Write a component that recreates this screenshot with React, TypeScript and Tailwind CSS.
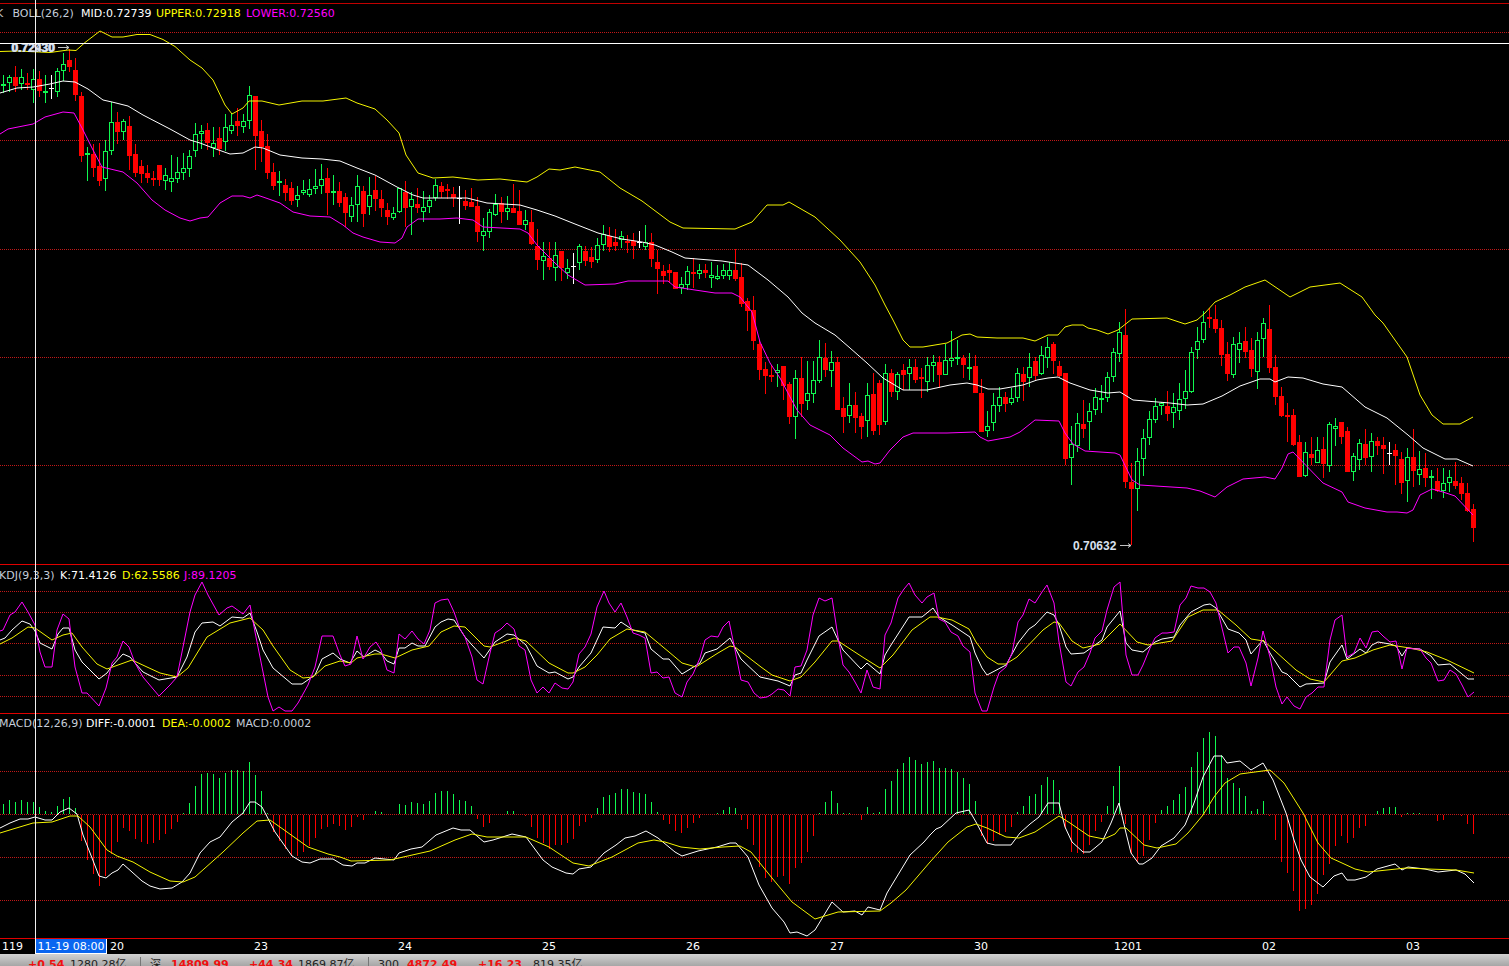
// FX chart terminal: candles with BOLL, KDJ and MACD panes
type Candle = [number, number, number, number, number];

// [type, high, bodyTop, bodyBottom, low] in page pixels. type: 0 red, 1 green, 2 white cross
const CANDLES: Candle[] = [
  [1,75,84,85,93],[1,75,77,83,92],[0,66,77,86,92],[1,69,77,84,90],[0,73,83,85,90],[1,69,79,90,103],[0,71,79,91,97],[1,75,91,93,103],[2,75,88,88,99],[1,68,71,92,97],
  [1,53,64,71,81],[0,49,60,67,72],[0,58,70,95,101],[0,92,96,156,162],[1,147,153,155,181],[0,144,154,168,177],[0,143,166,181,186],[1,140,151,179,191],[1,102,122,151,155],[0,112,122,132,144],
  [1,119,121,132,140],[0,116,126,156,170],[0,144,154,173,177],[0,160,166,174,183],[0,165,173,178,183],[0,171,178,180,186],[0,165,165,180,186],[1,168,175,181,190],[1,155,178,182,192],[1,157,172,179,183],
  [1,153,168,173,180],[1,150,156,169,177],[1,123,134,151,157],[1,125,131,134,149],[0,123,130,143,150],[1,127,143,148,157],[0,127,138,149,155],[1,114,127,142,151],[1,113,125,131,134],[0,108,121,126,136],
  [1,114,121,127,133],[1,86,95,121,129],[0,96,96,136,170],[0,120,131,147,162],[0,134,146,173,179],[0,163,172,186,190],[1,171,181,183,196],[0,179,185,193,201],[0,182,188,201,205],[1,186,195,200,207],
  [1,180,190,193,195],[1,179,189,195,197],[1,169,186,189,194],[1,164,179,186,194],[0,168,178,193,215],[1,175,191,193,205],[0,182,191,203,207],[0,193,197,213,227],[1,197,205,217,222],[1,175,186,205,222],
  [0,186,191,214,227],[1,177,195,207,215],[0,176,190,199,211],[0,190,199,208,217],[0,203,210,217,225],[1,207,213,218,220],[1,188,188,212,213],[0,181,192,208,227],[1,192,199,207,235],[0,188,204,208,213],
  [1,191,207,212,222],[1,195,200,207,213],[1,179,185,198,201],[0,182,186,192,198],[0,184,189,191,199],[0,187,194,198,207],[2,186,198,198,224],[0,190,201,206,210],[0,188,202,207,207],[0,197,206,232,242],
  [1,218,231,236,251],[1,209,212,232,238],[1,194,204,215,216],[0,197,203,212,223],[1,196,208,212,220],[0,184,208,213,213],[0,190,211,225,225],[1,210,220,225,230],[0,210,222,244,245],[0,229,246,260,270],
  [1,242,256,261,280],[0,242,258,267,270],[1,242,255,268,281],[0,251,251,268,281],[1,259,268,273,279],[2,253,266,266,284],[1,244,246,263,270],[0,246,251,261,266],[0,247,257,262,268],[1,238,245,260,263],
  [1,225,234,245,251],[0,227,236,247,252],[0,229,242,246,251],[1,231,236,240,248],[0,235,241,243,253],[0,233,241,246,259],[2,231,242,242,248],[1,225,242,247,250],[0,233,242,259,267],[0,250,262,269,294],
  [0,265,271,276,284],[0,264,270,273,283],[0,272,272,289,289],[1,277,284,288,294],[1,266,271,285,290],[0,258,272,274,288],[1,264,270,274,279],[0,264,270,273,278],[1,262,275,278,288],[1,265,276,279,280],
  [1,264,270,276,279],[1,262,270,276,280],[0,249,270,279,281],[0,263,277,304,307],[0,298,301,311,331],[0,296,310,341,350],[0,340,344,370,380],[0,362,369,376,394],[0,365,375,376,382],[1,364,370,373,387],
  [0,366,366,386,400],[0,382,384,417,424],[1,370,378,417,439],[0,357,378,404,417],[1,361,393,401,410],[1,361,380,394,403],[1,340,357,381,383],[0,343,358,370,377],[1,351,362,371,387],[0,357,362,410,410],
  [0,397,408,417,433],[1,383,405,416,423],[0,392,405,418,433],[0,413,416,427,439],[1,383,395,421,437],[0,373,394,431,435],[0,380,383,425,435],[1,364,373,422,425],[0,369,373,392,397],[1,372,374,392,400],
  [0,364,370,375,390],[1,359,367,374,390],[0,359,367,380,383],[0,368,377,379,398],[1,357,365,382,392],[1,355,362,366,382],[0,356,362,375,388],[1,344,360,375,375],[1,331,358,361,367],[1,340,357,359,365],
  [0,355,358,365,378],[1,353,367,369,380],[0,355,366,393,393],[0,379,393,432,432],[1,411,426,431,437],[1,393,405,423,431],[1,387,397,406,412],[0,392,397,404,412],[1,388,398,403,405],[1,368,373,398,402],
  [0,367,374,382,401],[1,353,367,378,387],[0,357,361,376,380],[1,346,355,374,375],[1,337,347,358,368],[0,342,344,361,374],[0,361,366,376,377],[0,373,373,459,465],[1,426,444,458,485],[1,413,423,446,452],
  [0,400,424,429,438],[1,403,411,422,450],[1,388,397,410,415],[1,385,398,400,413],[1,372,377,398,402],[1,348,352,377,382],[1,322,332,354,362],[0,309,335,482,488],[0,463,482,489,545],[1,448,461,489,511],
  [1,429,438,459,476],[1,411,419,438,445],[1,398,406,420,423],[1,402,403,406,415],[0,391,406,414,421],[1,393,407,413,428],[1,383,399,411,420],[1,370,391,399,409],[1,347,352,392,393],[1,327,341,350,359],
  [1,311,322,340,343],[0,308,317,319,328],[0,305,319,329,333],[0,320,328,355,366],[0,342,354,374,381],[1,337,344,375,378],[1,332,343,350,363],[0,327,341,352,358],[0,338,350,369,377],[1,332,340,372,389],
  [1,318,323,339,357],[0,305,329,368,373],[0,355,367,397,405],[0,387,396,416,417],[0,403,415,417,442],[0,409,415,445,446],[0,435,442,477,477],[1,442,452,476,477],[0,437,454,458,465],[1,437,450,463,463],
  [0,437,449,464,478],[1,422,424,466,472],[1,418,426,429,446],[0,422,422,437,444],[0,427,431,472,472],[1,453,456,472,481],[1,439,443,460,470],[0,429,444,458,465],[1,433,441,457,472],[0,437,441,446,455],
  [0,437,445,449,474],[2,442,453,453,465],[0,444,450,456,485],[0,452,459,483,494],[1,448,457,481,502],[0,429,457,471,487],[1,451,469,475,485],[0,453,468,478,487],[1,470,476,478,499],[0,468,481,491,492],
  [1,468,483,491,498],[1,470,477,483,492],[0,462,481,486,489],[0,477,483,494,500],[0,483,493,511,512],[0,504,509,528,542],
];

const UPPER = "0,51.5 17,51 50,52.5 68,50 76,50.5 85,42.5 100,31 112,37 123,37 137,34.5 150,34.5 163,39.5 175,46.5 190,60 202,68 213,80 225,105 232,114 243,108 249,101 262,101 279,105 302,101 323,101 346,98 357,103 375,109 387,120 399,133 406,155 418,173 433,178 453,177 478,180 500,179 527,182 537,177 549,169 560,170 575,167 600,172 620,188 642,201 670,222 683,228 735,229 752,222 767,205 783,205 789,202 815,217 840,240 860,262 875,285 885,305 893,320 903,340 910,347 923,347 947,343 962,335 970,334 977,337 997,338 1023,338 1035,341 1048,335 1058,335 1065,327 1072,325 1083,325 1088,328 1097,330 1108,334 1118,330 1132,319 1167,318 1185,324 1197,320 1205,313 1215,302 1230,295 1245,287 1265,280 1290,297 1310,287 1340,283 1362,297 1375,315 1383,323 1407,357 1420,395 1432,415 1443,424 1460,424 1473,417";
const MID = "0,93 17,88 33,87 50,84 63,81 75,82 88,89 103,100 112,102 128,106 143,115 170,129 190,140 200,143 213,148 230,154 243,153 255,147 263,148 280,155 302,158 322,159 340,161 357,168 375,175 397,187 413,195 423,198 467,198 487,203 520,205 537,210 555,216 575,224 598,233 622,239 642,242 655,245 672,252 685,258 722,261 748,265 768,280 788,297 802,313 815,323 835,335 850,348 867,363 883,378 903,390 927,390 950,385 967,383 977,385 988,389 1000,389 1023,385 1037,380 1048,378 1058,377 1070,383 1090,390 1108,393 1120,392 1133,400 1170,403 1187,405 1203,404 1222,396 1240,386 1260,379 1270,379 1275,382 1288,377 1303,378 1323,384 1342,387 1365,407 1387,418 1408,435 1423,448 1445,459 1457,459 1473,466";
const LOWER = "0,134 8,129 33,124 45,117 63,112 74,113 82,128 93,150 102,167 123,172 137,183 152,200 165,210 180,218 190,221 200,218 208,217 220,203 232,196 243,196 250,198 257,195 263,197 280,203 293,212 310,216 330,217 343,225 353,233 363,237 380,242 395,243 402,238 407,227 418,219 440,219 457,218 473,220 483,227 520,229 528,233 537,245 555,263 568,275 585,285 615,284 628,281 668,281 675,287 715,293 732,293 740,297 752,312 760,342 770,363 780,378 797,410 810,425 830,435 843,448 862,462 868,461 875,464 880,463 890,450 903,437 913,433 947,433 975,432 980,437 988,441 1010,437 1020,432 1035,420 1059,421 1065,433 1073,444 1085,451 1115,453 1120,455 1132,480 1140,485 1187,488 1200,491 1215,497 1227,487 1243,479 1265,477 1275,479 1282,468 1288,454 1293,452 1323,483 1342,492 1348,502 1365,508 1387,512 1397,512 1407,513 1413,510 1420,495 1432,489 1443,492 1455,496 1473,515";

const K_LINE = "0,640 5,638 12,630 22,621 30,624 35,631 40,643 52,649 58,634 63,628 69,628 75,650 82,662 99,679 107,673 112,666 123,654 130,657 135,663 143,672 159,680 177,677 187,657 195,632 202,623 213,622 220,626 232,617 243,618 250,613 257,632 263,650 273,668 292,684 302,684 315,675 322,659 333,653 340,659 350,663 357,651 364,657 375,650 381,653 387,661 394,664 399,648 405,648 412,643 418,646 425,646 435,627 441,622 448,619 454,620 465,637 472,645 484,658 495,642 507,634 514,635 526,645 537,666 549,673 555,672 568,679 573,677 579,667 591,653 603,627 615,628 621,622 633,630 645,633 651,649 663,659 669,659 682,674 700,663 705,653 717,649 730,638 741,659 760,677 778,681 790,686 795,675 801,673 807,660 819,636 832,627 838,640 843,650 861,669 867,663 880,674 885,655 891,645 909,617 922,617 933,608 939,617 952,625 970,637 975,653 982,668 987,675 1006,665 1018,643 1029,629 1035,625 1047,612 1054,615 1059,625 1066,647 1071,654 1084,653 1102,640 1107,627 1120,611 1126,643 1132,650 1143,652 1155,642 1162,639 1174,637 1180,625 1191,612 1204,605 1210,604 1216,608 1228,629 1239,633 1246,640 1251,654 1263,640 1270,653 1282,672 1287,674 1300,687 1306,684 1324,683 1330,662 1342,645 1347,659 1360,649 1366,653 1372,645 1378,642 1390,644 1396,646 1402,656 1407,648 1420,649 1431,656 1438,665 1450,664 1468,679 1474,679";
const D_LINE = "0,644 12,638 28,627 35,628 52,640 63,635 72,633 82,647 97,664 107,669 132,660 147,667 160,673 177,677 188,668 207,637 230,623 250,618 263,630 273,646 290,670 303,678 313,677 325,666 340,661 351,663 357,658 375,654 381,654 395,658 412,650 429,646 441,632 454,626 465,627 484,646 490,647 514,638 526,641 549,663 568,673 573,673 585,667 597,655 610,639 627,629 645,632 669,652 682,663 696,667 718,653 730,646 735,647 761,667 772,675 790,681 801,677 815,662 832,641 838,641 864,658 880,668 893,655 912,630 930,617 937,617 952,620 969,629 976,642 987,657 998,664 1006,664 1017,657 1043,630 1054,622 1059,623 1072,641 1083,648 1100,644 1120,624 1137,642 1148,645 1172,641 1188,617 1203,610 1218,610 1236,625 1251,639 1264,641 1296,670 1310,679 1324,682 1342,661 1355,658 1373,650 1390,645 1410,648 1427,652 1447,660 1474,673";
const J_LINE = "0,631 3,630 10,615 15,612 22,602 28,612 35,625 40,652 45,667 52,667 57,630 63,614 69,619 75,667 82,693 87,693 99,706 106,688 112,663 117,657 123,641 129,647 135,663 143,677 159,696 170,685 177,677 183,647 190,612 195,595 202,582 208,595 219,615 227,608 232,606 243,614 250,605 255,632 262,667 268,697 273,711 279,707 285,711 292,711 298,703 308,685 315,667 322,636 333,636 340,655 345,666 351,664 357,636 363,659 370,647 376,642 381,650 387,670 394,673 399,634 405,639 412,631 418,639 424,644 430,630 435,603 441,600 448,599 454,612 460,629 465,637 472,657 477,680 483,684 490,653 495,633 501,629 507,623 514,629 519,646 525,650 531,680 537,693 543,687 549,693 555,683 562,688 568,689 573,682 579,654 585,647 591,634 597,607 604,591 609,603 615,612 621,603 627,617 633,633 639,635 645,638 651,673 657,672 663,678 669,677 675,693 682,697 687,682 693,674 700,658 705,640 711,636 718,637 723,627 729,621 735,650 741,680 748,682 754,693 760,698 767,697 772,694 778,689 784,690 790,696 795,667 801,666 807,650 813,615 819,598 825,601 832,598 838,637 843,665 849,672 855,682 861,693 867,670 873,687 880,689 885,635 891,623 898,598 904,589 909,583 915,595 922,603 927,597 934,593 939,619 945,622 951,632 958,636 963,646 970,652 975,693 982,711 987,711 994,687 999,673 1006,667 1012,653 1018,622 1023,615 1029,599 1035,603 1042,592 1047,585 1054,603 1059,642 1066,682 1071,686 1078,672 1084,667 1090,653 1095,638 1102,631 1107,610 1114,587 1120,582 1126,655 1132,675 1138,675 1143,665 1150,648 1155,638 1162,633 1167,633 1174,632 1180,605 1186,598 1191,586 1198,588 1204,588 1210,592 1216,603 1222,628 1228,653 1234,647 1239,647 1246,663 1251,686 1258,658 1263,631 1270,657 1276,687 1282,704 1287,697 1294,706 1300,709 1306,697 1312,693 1318,687 1324,687 1330,640 1335,620 1342,615 1347,657 1354,653 1360,638 1366,648 1372,632 1378,631 1383,636 1390,642 1396,641 1402,669 1407,648 1414,649 1420,649 1426,658 1431,663 1438,681 1444,680 1450,670 1456,674 1462,685 1468,697 1474,692";

const DIFF = "0,828 10,823 20,819 28,819 35,817 45,820 52,820 60,812 69,808 77,814 83,835 92,858 99,876 106,878 112,873 118,870 123,864 132,872 142,881 150,886 160,889 172,888 182,882 190,873 200,853 210,842 220,837 232,822 243,813 250,802 255,802 262,807 275,832 292,856 302,862 310,863 320,859 333,859 343,865 352,866 357,863 365,863 375,858 394,860 399,853 411,849 422,847 436,835 453,828 461,830 470,830 484,842 493,840 512,834 526,837 543,860 552,867 566,873 573,874 579,869 591,867 604,853 616,845 625,838 635,836 646,831 658,838 675,852 682,856 698,851 717,847 730,843 736,843 748,857 759,885 772,908 784,922 790,933 797,932 807,936 815,930 832,902 843,912 855,911 862,915 868,907 880,910 887,893 910,855 924,842 930,835 936,829 941,827 956,813 969,810 976,822 987,843 995,845 1011,845 1020,833 1030,824 1039,817 1048,803 1059,803 1065,827 1072,842 1083,852 1090,852 1102,842 1111,823 1119,803 1126,833 1131,853 1139,864 1143,864 1152,858 1161,846 1174,838 1185,825 1194,803 1203,777 1214,756 1222,756 1227,763 1240,761 1251,770 1263,763 1273,780 1286,813 1294,840 1301,860 1310,877 1323,887 1334,876 1342,873 1347,880 1355,880 1366,877 1377,869 1395,864 1402,870 1408,867 1425,869 1438,872 1456,870 1465,874 1474,883";
const DEA = "0,833 13,829 33,823 52,822 70,816 78,816 90,827 107,850 117,856 133,862 150,872 170,881 183,882 195,877 223,852 243,833 257,821 270,820 287,832 308,847 328,854 340,857 351,861 390,860 430,851 455,840 472,834 487,837 526,837 549,847 573,863 589,866 612,857 638,843 654,840 665,842 681,847 700,849 723,847 740,846 751,852 772,878 792,902 815,919 838,912 880,911 891,903 906,890 930,862 948,842 967,827 976,824 987,828 1006,837 1019,838 1035,832 1059,816 1070,823 1089,836 1104,839 1115,834 1120,828 1126,828 1144,845 1157,848 1176,844 1188,833 1203,815 1214,797 1225,783 1240,774 1270,770 1284,783 1303,813 1318,843 1331,858 1342,863 1355,869 1368,872 1406,868 1428,869 1456,870 1474,873";

const HIST = [
  10,14,12,14,12,12,7,3,2,8,15,17,6,-26,-45,-59,-71,-61,-39,-27,-13,-16,-24,-27,-29,-28,-25,-19,-14,-7,
  1,11,28,40,41,40,36,41,44,44,43,52,39,23,1,-17,-26,-34,-41,-41,-37,-31,-23,-14,-12,-9,-11,-15,-12,-2,
  -5,0,3,2,0,0,10,9,12,11,10,13,21,23,23,20,14,13,8,-4,-12,-8,0,0,3,3,0,-1,-12,-23,
  -28,-34,-30,-30,-28,-24,-11,-7,-3,6,17,19,21,25,25,22,21,20,12,2,-5,-9,-16,-18,-13,-8,-3,0,0,1,
  4,7,6,-5,-14,-30,-52,-63,-67,-62,-61,-69,-53,-48,-37,-21,1,12,23,11,1,1,0,-5,7,1,2,25,33,45,
  51,57,54,50,52,53,46,46,45,42,36,30,13,-21,-29,-26,-20,-17,-12,2,8,18,20,29,37,34,24,-14,-37,-38,
  -39,-30,-16,-7,8,28,48,-9,-39,-47,-41,-25,-8,4,8,14,20,27,47,62,76,82,78,59,36,31,26,18,3,5,
  13,-1,-25,-47,-58,-76,-96,-94,-90,-79,-60,-49,-31,-21,-28,-23,-13,-11,0,3,6,7,7,-2,1,1,1,0,0,-6,
  -5,0,0,-1,-9,-19,
];

const RED = "#ff0000";
const GREEN = "#10f850";
const YELLOW = "#f4f400";

function Dotted({ y }: { y: number }) {
  return <line x1={0} x2={1509} y1={y + 0.5} y2={y + 0.5} stroke="#c01818" strokeDasharray="1 1" shapeRendering="crispEdges" />;
}

function Trace({ points, color }: { points: string; color: string }) {
  return <polyline points={points} fill="none" stroke={color} strokeWidth={1} />;
}

function Candles() {
  return (
    <g shapeRendering="crispEdges">
      {CANDLES.map(([t, high, top, bottom, low], i) => {
        const x = 3 + 6 * i;
        if (t === 2) {
          return (
            <g key={i} fill="#ffffff">
              <rect x={x} y={high} width={1} height={low - high} />
              <rect x={x - 2} y={top} width={5} height={1} />
            </g>
          );
        }
        const color = t === 0 ? RED : GREEN;
        return (
          <g key={i}>
            <rect x={x} y={high} width={1} height={low - high} fill={color} />
            {t === 0 ? (
              <rect x={x - 2} y={top} width={5} height={Math.max(bottom - top, 2)} fill={color} />
            ) : bottom - top <= 2 ? (
              <rect x={x - 2} y={top} width={5} height={2} fill={color} />
            ) : (
              <rect x={x - 1.5} y={top + 0.5} width={4} height={bottom - top - 1} fill="#000000" stroke={color} />
            )}
          </g>
        );
      })}
    </g>
  );
}

function Histogram() {
  return (
    <g shapeRendering="crispEdges">
      {HIST.map((v, i) =>
        v === 0 ? null : (
          <rect key={i} x={3 + 6 * i} y={v > 0 ? 814 - v : 815} width={1} height={Math.abs(v)} fill={v > 0 ? GREEN : RED} />
        ),
      )}
    </g>
  );
}

function PriceTag({ x, y, label, ghost }: { x: number; y: number; label: string; ghost?: string }) {
  const arrowX = x + 47;
  return (
    <g fontFamily="Liberation Sans">
      {ghost && (
        <text x={x + 1} y={y} fontSize={12} fontWeight={700} fill="#c8d4e8">
          {ghost}
        </text>
      )}
      <text x={x} y={y} fontSize={12} fontWeight={700} fill="#d8e0ee">
        {label}
      </text>
      <path d={`M${arrowX} ${y - 4.5}h11m-3 -2l3 2l-3 2`} fill="none" stroke="#c0c0c0" />
    </g>
  );
}

export default function App() {
  return (
    <div className="relative h-[966px] w-full overflow-hidden bg-black pt-[3px] font-['DejaVu_Sans','Noto_Sans_CJK_SC',sans-serif] text-[11px] leading-[16px]">
      {/* price pane */}
      <section className="relative h-[562px] border-y border-t-[#c00000] border-b-[#e00000]">
        <svg className="absolute inset-0 h-full w-[1509px]" viewBox="0 4 1509 560">
          {[32, 140, 249, 357, 465].map((y) => (
            <Dotted key={y} y={y} />
          ))}
          <Candles />
          <Trace points={UPPER} color={YELLOW} />
          <Trace points={MID} color="#ffffff" />
          <Trace points={LOWER} color="#ff00ff" />
          <PriceTag x={11} y={52} label="0.72930" ghost="0.72430" />
          <PriceTag x={1073} y={550} label="0.70632" />
        </svg>
        <div className="relative flex h-[16px] pt-[2px] whitespace-nowrap">
          <span className="ml-[-4px] w-[16.5px] text-[#c0c0c0]">K</span>
          <span className="w-[68.5px] text-[#c4ccd8]">BOLL(26,2)</span>
          <span className="w-[75px] text-white">MID:0.72739</span>
          <span className="w-[90px] text-[#ffff00]">UPPER:0.72918</span>
          <span className="text-[#ff00ff]">LOWER:0.72560</span>
        </div>
      </section>

      {/* KDJ pane */}
      <section className="relative h-[149px] border-b border-[#e00000]">
        <svg className="absolute inset-0 h-full w-[1509px]" viewBox="0 565 1509 148">
          {[591, 612, 643, 675, 696].map((y) => (
            <Dotted key={y} y={y} />
          ))}
          <Trace points={K_LINE} color="#ffffff" />
          <Trace points={D_LINE} color={YELLOW} />
          <Trace points={J_LINE} color="#ff00ff" />
        </svg>
        <div className="relative flex h-[16px] pt-[3px] whitespace-nowrap">
          <span className="ml-[-1px] w-[61px] text-[#c4ccd8]">KDJ(9,3,3)</span>
          <span className="w-[62px] text-white">K:71.4126</span>
          <span className="w-[62px] text-[#ffff00]">D:62.5586</span>
          <span className="text-[#ff00ff]">J:89.1205</span>
        </div>
      </section>

      {/* MACD pane */}
      <section className="relative h-[225px] border-b border-[#e00000]">
        <svg className="absolute inset-0 h-full w-[1509px]" viewBox="0 714 1509 224">
          {[771, 814, 857, 900].map((y) => (
            <Dotted key={y} y={y} />
          ))}
          <Histogram />
          <Trace points={DIFF} color="#ffffff" />
          <Trace points={DEA} color={YELLOW} />
        </svg>
        <div className="relative flex h-[16px] pt-[2px] whitespace-nowrap">
          <span className="ml-[-1px] w-[87px] text-[#c4ccd8]">MACD(12,26,9)</span>
          <span className="w-[76px] text-white">DIFF:-0.0001</span>
          <span className="w-[74px] text-[#ffff00]">DEA:-0.0002</span>
          <span className="text-[#c4ccd8]">MACD:0.0002</span>
        </div>
      </section>

      {/* time axis */}
      <div className="relative flex h-[15px] whitespace-nowrap text-white">
        <span className="w-[110px] pl-[2px]">119</span>
        {["20", "23", "24", "25", "26", "27", "30"].map((d) => (
          <span key={d} className="w-[144px]">
            {d}
          </span>
        ))}
        <span className="ml-[-4px] w-[148px]">1201</span>
        <span className="w-[144px]">02</span>
        <span>03</span>
        <span className="absolute top-0 left-[35px] h-[15px] w-[72px] border-x border-b border-white bg-[#0a66f0] text-center leading-[15px]">
          11-19 08:00
        </span>
      </div>

      {/* quote strip, cut off by the window edge */}
      <div className="flex h-[12px] bg-gradient-to-b from-[#d2d2d2] to-[#a6a6a6] pt-[3px] pl-[28px] whitespace-nowrap">
        <span className="w-[42px] font-bold text-[#f01010]">+0.54</span>
        <span className="w-[70px] text-[#222222]">1280.28亿</span>
        <span className="mr-[9px] h-[9px] w-px bg-[#777777]" />
        <span className="w-[21px] text-[#222222]">深</span>
        <span className="w-[78px] font-bold text-[#f01010]">14809.99</span>
        <span className="w-[49px] font-bold text-[#f01010]">+44.34</span>
        <span className="w-[70px] text-[#222222]">1869.87亿</span>
        <span className="mr-[9px] h-[9px] w-px bg-[#777777]" />
        <span className="w-[29px] text-[#222222]">300</span>
        <span className="w-[71px] font-bold text-[#f01010]">4872.49</span>
        <span className="w-[55px] font-bold text-[#f01010]">+16.23</span>
        <span className="text-[#222222]">819.35亿</span>
      </div>

      {/* crosshair */}
      <div className="absolute top-0 left-[35px] h-[939px] w-px bg-[#f0f0f0]" />
      <div className="absolute top-[43px] left-0 h-px w-full bg-white" />
    </div>
  );
}
